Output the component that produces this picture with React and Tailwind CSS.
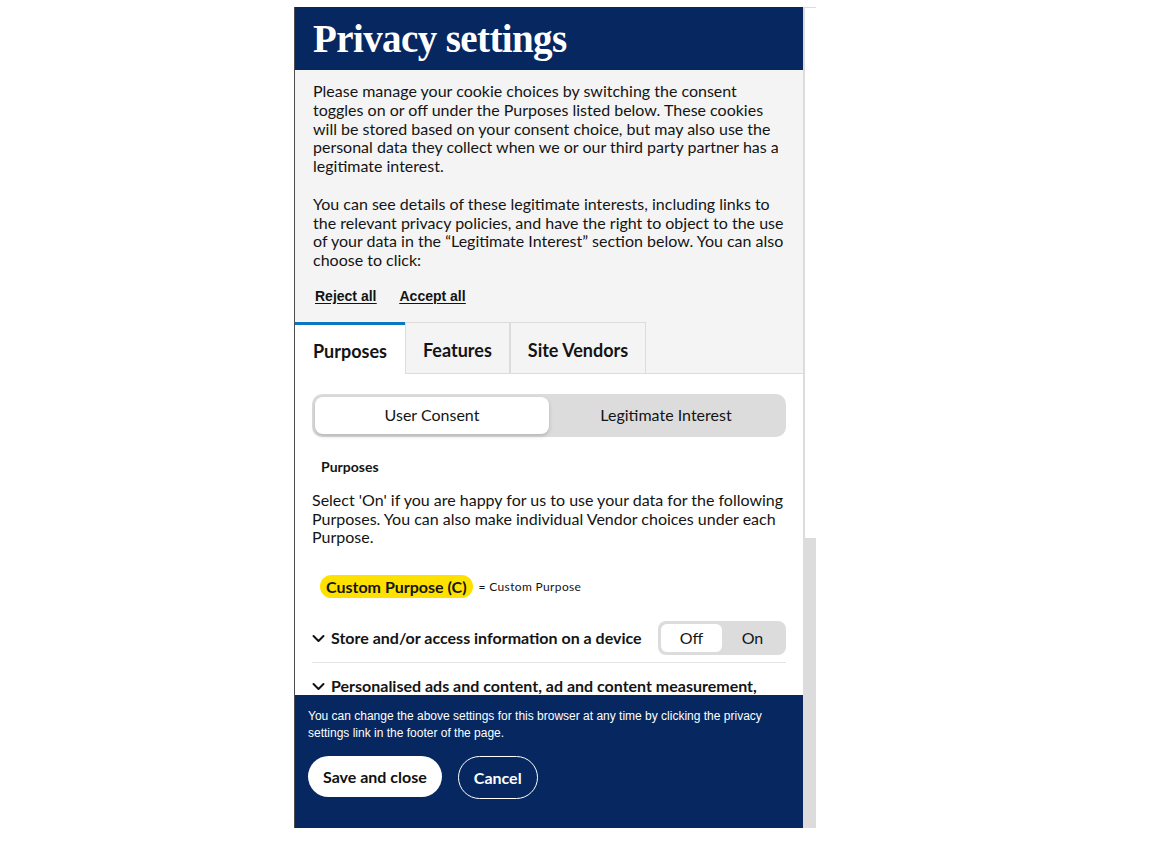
import React, { useState } from 'react'

const sans = { fontFamily: 'Lato, "Noto Sans", sans-serif' }

const Chevron = () => (
  <svg width="13" height="9" viewBox="0 0 13 9" fill="none" className="shrink-0">
    <path d="M1.5 2l5 5 5-5" stroke="#111" strokeWidth="2" strokeLinecap="round" strokeLinejoin="round" />
  </svg>
)

const App = () => {
  const [tab, setTab] = useState('Purposes')
  const [mode, setMode] = useState('consent')
  const [store, setStore] = useState(false)

  return (
    <div className="min-h-screen bg-white">
      <div className="ml-[294px] pt-[7px] flex">
        {/* Dialog */}
        <div className="w-[509px] h-[821px] border-l border-[#4d4d4d] flex flex-col text-[#141414]" style={sans}>
          {/* Header */}
          <div className="h-[63px] shrink-0 bg-[#06275f] flex items-center px-[18px]">
            <h1
              className="text-white text-[39px] font-bold leading-none tracking-[-0.6px]"
              style={{ fontFamily: '"Liberation Serif", "DejaVu Serif", serif' }}
            >
              Privacy settings
            </h1>
          </div>

          {/* Scrollable body */}
          <div className="flex-1 overflow-hidden">
            <div className="bg-[#f4f4f4] px-[18px] pt-[12px] pb-[17px]">
              <p className="text-[16px] leading-[18.75px]">
                Please manage your cookie choices by switching the consent toggles on or off under the Purposes listed below. These cookies will be stored based on your consent choice, but may also use the personal data they collect when we or our third party partner has a legitimate interest.
              </p>
              <p className="text-[16px] leading-[18.75px] mt-[19px]">
                You can see details of these legitimate interests, including links to the relevant privacy policies, and have the right to object to the use of your data in the “Legitimate Interest” section below. You can also choose to click:
              </p>
              <div
                className="flex gap-[23px] mt-[17px] pl-[2px] text-[14px] font-bold underline underline-offset-2 leading-[18px]"
                style={{ fontFamily: '"Liberation Sans", Arial, sans-serif' }}
              >
                <button className="underline">Reject all</button>
                <button className="underline">Accept all</button>
              </div>
            </div>

            {/* Tabs */}
            <div className="flex h-[52px] bg-[#f4f4f4]">
              {['Purposes', 'Features', 'Site Vendors'].map((t) => (
                <button
                  key={t}
                  onClick={() => setTab(t)}
                  className={
                    tab === t
                      ? 'px-[18px] pt-[4px] bg-white border-t-[3px] border-[#0a77c2] text-[18px] font-bold'
                      : 'px-[17px] pt-[6px] bg-[#f4f4f4] border border-[#dcdcdc] text-[18px] font-bold'
                  }
                >
                  {t}
                </button>
              ))}
              <div className="flex-1 border-b border-[#dcdcdc]" />
            </div>

            <div className="bg-white px-[17px] pt-[20px]">
              {/* Segmented control */}
              <div className="h-[43px] rounded-[10px] bg-[#dcdcdc] p-[3px] flex text-[16px]">
                <button
                  onClick={() => setMode('consent')}
                  className={
                    mode === 'consent'
                      ? 'flex-1 rounded-[8px] bg-white shadow-[0_2px_4px_rgba(0,0,0,0.18)]'
                      : 'flex-1 rounded-[8px]'
                  }
                >
                  User Consent
                </button>
                <button
                  onClick={() => setMode('legit')}
                  className={
                    mode === 'legit'
                      ? 'flex-1 rounded-[8px] bg-white shadow-[0_2px_4px_rgba(0,0,0,0.18)]'
                      : 'flex-1 rounded-[8px]'
                  }
                >
                  Legitimate Interest
                </button>
              </div>

              <h2 className="mt-[21px] ml-[9px] text-[14px] font-bold leading-[18px]">Purposes</h2>
              <p className="mt-[15px] text-[16px] leading-[18.75px]">
                Select 'On' if you are happy for us to use your data for the following Purposes. You can also make individual Vendor choices under each Purpose.
              </p>

              <div className="mt-[28px] ml-[8px] flex items-center gap-[6px]">
                <span className="bg-[#ffe100] rounded-full px-[6px] h-[23px] flex items-center text-[16px] font-bold">
                  Custom Purpose (C)
                </span>
                <span className="text-[12px] tracking-[0.35px]">= Custom Purpose</span>
              </div>

              {/* Purpose rows */}
              <div className="mt-[23px] flex items-center justify-between pb-[7px] border-b border-[#e3e3e3]">
                <div className="flex items-center gap-[6px] text-[16px] font-bold">
                  <Chevron />
                  Store and/or access information on a device
                </div>
                <div className="w-[128px] h-[34px] rounded-[8px] bg-[#dcdcdc] p-[3px] flex text-[16px]">
                  <button
                    onClick={() => setStore(false)}
                    className={store ? 'flex-1 rounded-[6px]' : 'flex-1 rounded-[6px] bg-white'}
                  >
                    Off
                  </button>
                  <button
                    onClick={() => setStore(true)}
                    className={store ? 'flex-1 rounded-[6px] bg-white' : 'flex-1 rounded-[6px]'}
                  >
                    On
                  </button>
                </div>
              </div>
              <div className="mt-[13px] flex items-start gap-[6px] text-[16px] font-bold leading-[20px]">
                <span className="pt-[6px]"><Chevron /></span>
                <span>Personalised ads and content, ad and content measurement, audience research and services development</span>
              </div>
            </div>
          </div>

          {/* Footer */}
          <div className="h-[133px] shrink-0 bg-[#06275f] px-[13px] pt-[13px]">
            <p
              className="text-white text-[12px] leading-[17px]"
              style={{ fontFamily: '"Liberation Sans", Arial, sans-serif' }}
            >
              You can change the above settings for this browser at any time by clicking the privacy settings link in the footer of the page.
            </p>
            <div className="mt-[14px] flex items-start gap-[16px]">
              <button className="h-[41px] px-[15px] rounded-full bg-white text-[#111] text-[16px] font-bold">
                Save and close
              </button>
              <button className="h-[43px] px-[15px] rounded-full border border-white text-white text-[16px] font-bold">
                Cancel
              </button>
            </div>
          </div>
        </div>

        {/* Scrollbar */}
        <div className="w-[13px] h-[821px] flex flex-col">
          <div className="flex-1 border-l-2 border-t border-[#dcdcdc] bg-white" />
          <div className="h-[290px] bg-[#dcdcdc]" />
        </div>
      </div>
    </div>
  )
}

export default App
